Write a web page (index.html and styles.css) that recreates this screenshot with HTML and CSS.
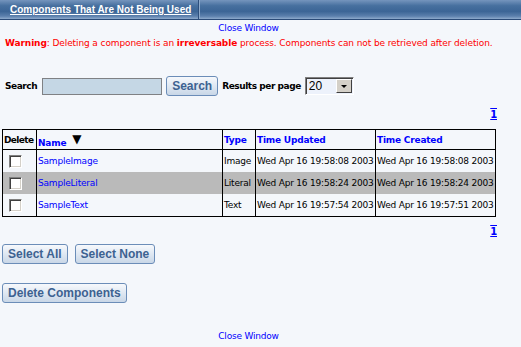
FILE: index.html
```html
<!DOCTYPE html>
<html lang="en">
<head>
    <meta charset="UTF-8">
    <title>Components That Are Not Being Used</title>
    <link rel="stylesheet" href="styles.css">
</head>
<body>
    <div class="title-bar">
        <div class="title-tab"><span class="title-text">Components That Are Not Being Used</span></div>
        <div class="title-rest"></div>
    </div>

    <div class="close-link"><a href="#">Close Window</a></div>

    <p class="warning"><b>Warning</b>: Deleting a component is an <b>irreversable</b> process. Components can not be retrieved after deletion.</p>

    <form class="search-row">
        <label class="lbl" for="search">Search</label>
        <input type="text" id="search" class="search-input">
        <button type="button" class="btn">Search</button>
        <span class="lbl">Results per page</span>
        <div class="select-box">
            <span class="select-value">20</span>
            <span class="select-drop"><span class="arrow"></span></span>
        </div>
    </form>

    <div class="pager"><a href="#">1</a></div>

    <table class="grid">
        <colgroup>
            <col class="w-del">
            <col class="w-name">
            <col class="w-type">
            <col class="w-time">
            <col class="w-time">
        </colgroup>
        <thead>
            <tr>
                <th class="th-del">Delete</th>
                <th><a href="#">Name</a><span class="sort">&#9660;</span></th>
                <th><a href="#">Type</a></th>
                <th><a href="#">Time Updated</a></th>
                <th><a href="#">Time Created</a></th>
            </tr>
        </thead>
        <tbody>
            <tr>
                <td class="cell-chk"><input type="checkbox" class="chk"></td>
                <td><a href="#">SampleImage</a></td>
                <td>Image</td>
                <td>Wed Apr 16 19:58:08 2003</td>
                <td>Wed Apr 16 19:58:08 2003</td>
            </tr>
            <tr class="hl">
                <td class="cell-chk"><input type="checkbox" class="chk"></td>
                <td><a href="#">SampleLiteral</a></td>
                <td>Literal</td>
                <td>Wed Apr 16 19:58:24 2003</td>
                <td>Wed Apr 16 19:58:24 2003</td>
            </tr>
            <tr>
                <td class="cell-chk"><input type="checkbox" class="chk"></td>
                <td><a href="#">SampleText</a></td>
                <td>Text</td>
                <td>Wed Apr 16 19:57:54 2003</td>
                <td>Wed Apr 16 19:57:51 2003</td>
            </tr>
        </tbody>
    </table>

    <div class="pager pager-bottom"><a href="#">1</a></div>

    <div class="actions">
        <button type="button" class="btn">Select All</button>
        <button type="button" class="btn">Select None</button>
    </div>
    <div class="actions actions-delete">
        <button type="button" class="btn">Delete Components</button>
    </div>

    <div class="close-link close-bottom"><a href="#">Close Window</a></div>
</body>
</html>
```

FILE: styles.css
```css
body {
    margin: 0;
    background: #f4f7fb;
    font-family: "DejaVu Sans", Verdana, sans-serif;
    font-size: 9px;
    letter-spacing: -0.2px;
    color: #000;
}
a {
    color: #0000ff;
    text-decoration: none;
}
.title-bar {
    display: flex;
    height: 19px;
    background: linear-gradient(#7595bd, #47709f 30%, #3c6596 60%, #5c80ad 85%, #8fabcd);
    border-bottom: 1px solid #2b4b78;
}
.title-tab {
    width: 199px;
    padding-left: 10px;
    box-sizing: border-box;
    border-right: 1px solid #2e4f7d;
    box-shadow: 1px 0 0 #8eaacb;
    display: flex;
    align-items: center;
}
.title-text {
    color: #fff;
    font-family: "Liberation Sans", Arial, sans-serif;
    font-weight: bold;
    font-size: 10px;
    letter-spacing: 0;
    white-space: nowrap;
    text-decoration: underline;
}
.title-rest {
    flex: 1;
}
.close-link {
    text-align: center;
    width: 497px;
    margin-top: 2px;
    line-height: 12px;
}
.warning {
    color: #ff0000;
    margin: 3px 0 0 5px;
    line-height: 12px;
    letter-spacing: -0.1px;
}
.search-row {
    display: flex;
    align-items: center;
    margin: 27px 0 0 5px;
    height: 20px;
}
.lbl {
    font-weight: bold;
    letter-spacing: -0.45px;
}
.search-input {
    width: 120px;
    height: 17px;
    box-sizing: border-box;
    margin: 0 4px 0 5px;
    background: #c5d7e5;
    border: 1px solid #7f8184;
    padding: 0 2px;
}
.btn {
    font-family: "Liberation Sans", Arial, sans-serif;
    font-weight: bold;
    font-size: 12px;
    letter-spacing: 0;
    color: #3d6291;
    background: linear-gradient(#f7f9fc, #dfe8f2 50%, #c9d7e7);
    border: 1px solid #6b8db8;
    border-radius: 3px;
    height: 20px;
    padding: 0 5px;
    cursor: pointer;
}
.search-row .btn {
    margin-right: 4px;
}
.select-box {
    display: flex;
    width: 49px;
    height: 18px;
    box-sizing: border-box;
    margin-left: 4px;
    border: 1px solid;
    border-color: #808080 #fff #fff #808080;
    box-shadow: inset 1px 1px 0 #404040;
    background: #edf2fb;
}
.select-value {
    flex: 1;
    font-family: "Liberation Sans", Arial, sans-serif;
    font-size: 12px;
    letter-spacing: 0;
    line-height: 16px;
    padding-left: 3px;
}
.select-drop {
    width: 16px;
    margin: 1px 1px 1px 0;
    background: #d4d0c8;
    border: 1px solid;
    border-color: #fff #404040 #404040 #fff;
    box-sizing: border-box;
    display: flex;
    align-items: center;
    justify-content: center;
}
.arrow {
    border-left: 3px solid transparent;
    border-right: 3px solid transparent;
    border-top: 3px solid #000;
}
.pager {
    width: 497px;
    text-align: right;
    margin-top: 13px;
    font-weight: bold;
    font-size: 10px;
    line-height: 12px;
}
.pager a {
    text-decoration: underline overline;
}
.grid {
    margin: 8px 0 0 2px;
    border-collapse: collapse;
    border: 1px solid #000;
    table-layout: fixed;
    width: 494px;
}
.w-del { width: 34px; }
.w-name { width: 186px; }
.w-type { width: 33px; }
.w-time { width: 120px; }
.grid th,
.grid td {
    border-left: 1px solid #000;
    text-align: left;
    white-space: nowrap;
    overflow: hidden;
    padding: 0 0 0 1px;
}
.grid th {
    height: 19px;
    font-weight: bold;
    border-bottom: 1px solid #000;
}
.grid th.th-del {
    letter-spacing: -0.6px;
}
.grid td {
    height: 22px;
}
.grid .hl td {
    background: #bababa;
}
.grid td.cell-chk {
    padding-left: 6px;
}
.sort {
    font-size: 12px;
    margin-left: 6px;
    vertical-align: 3px;
}
.chk {
    -webkit-appearance: none;
    appearance: none;
    width: 13px;
    height: 13px;
    margin: 0;
    display: block;
    background: #fff;
    border: 1px solid;
    border-color: #808080 #fff #fff #808080;
    box-shadow: inset 1px 1px 0 #404040, inset -1px -1px 0 #d4d0c8;
}
.pager-bottom {
    margin-top: 9px;
}
.actions {
    display: flex;
    gap: 7px;
    margin: 6px 0 0 2px;
}
.actions-delete {
    margin-top: 19px;
}
.close-bottom {
    margin-top: 27px;
}
```
